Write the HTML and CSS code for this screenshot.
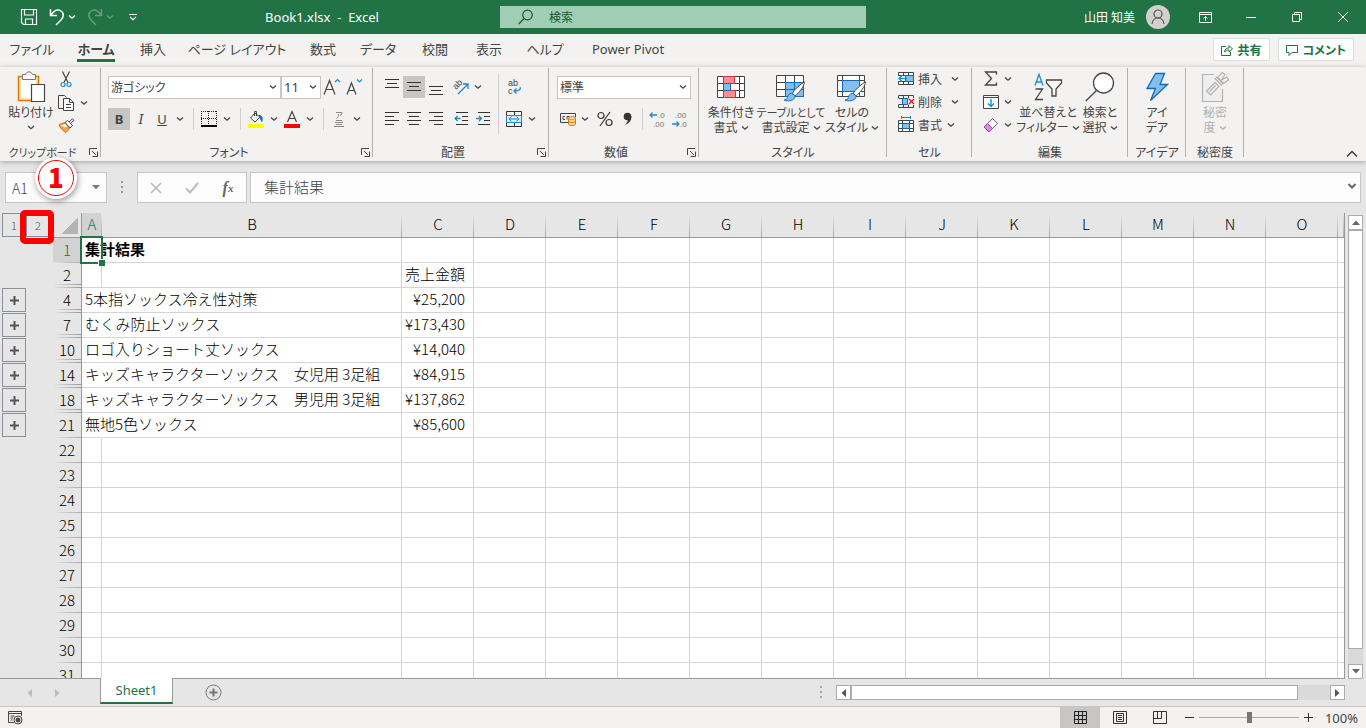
FILE: index.html
```
<!DOCTYPE html>
<html lang="ja">
<head>
  <meta charset="UTF-8" />
  <meta name="viewport" content="width=device-width, initial-scale=1.0"/>
  <title>Book1.xlsx - Excel</title>
  <link rel="stylesheet" href="styles.css">
</head>
<body>
  <svg class="defs" width="0" height="0" aria-hidden="true">
    <symbol id="chev" viewBox="0 0 8 8"><path d="M1 2.500 4 5.200 7 2.500" fill="none" stroke="currentColor" stroke-width="1.300"/></symbol>
    <symbol id="launch" viewBox="0 0 9 9"><path d="M.5 7V.5H8M3 3l4 4M8.500 3.500V8.500H3.500" fill="none" stroke="#444"/></symbol>
    <symbol id="brush" viewBox="0 0 24 22"><path d="M22.500 1C18 3 12 9 9.500 13l3 2.500C17 12 22 6 22.500 1z" fill="#fff" stroke="#444"/><path d="M9 13c-3 0-4 2-4.500 4.500C4 19 2.500 19.500 1 20c4 1.500 9 1 11-2 .8-1.200.5-2.500-.2-3.200z" fill="#83beec" stroke="#0f6cbd"/></symbol>
  </svg>

  <header class="titlebar">
    <div class="title-left">
      <div class="quick">
        <button class="q-btn" aria-label="上書き保存"><svg width="18" height="18" viewBox="0 0 18 18" fill="none" stroke="#fff" stroke-width="1.200"><path d="M1.500 1.500h15v15h-13l-2-2zM4.500 1.500v5.500h9V1.500M5.500 16.500v-5.500h7v5.500"/></svg></button>
        <button class="q-btn" aria-label="元に戻す"><svg width="16" height="18" viewBox="0 0 16 18" fill="none" stroke="#fff" stroke-width="1.500"><path d="M1.500 1v6.500H8M1.500 7.500C5 2.500 9 1 12 3s3 6 0 9l-5 5"/></svg></button>
        <button class="q-chev" aria-label="元に戻すの一覧"><svg width="8" height="8"><use href="#chev"/></svg></button>
        <button class="q-btn dim" aria-label="やり直し"><svg width="16" height="18" viewBox="0 0 16 18" fill="none" stroke="#fff" stroke-width="1.500"><path d="M14.500 1v6.500H8M14.500 7.500C11 2.500 7 1 4 3s-3 6 0 9l5 5"/></svg></button>
        <button class="q-chev dim" aria-label="やり直しの一覧"><svg width="8" height="8"><use href="#chev"/></svg></button>
        <button class="q-btn" aria-label="クイック アクセスのカスタマイズ"><svg width="8" height="8" viewBox="0 0 8 8" fill="none" stroke="#fff" stroke-width="1.200"><path d="M0 1.500h8M1 4l3 2.700L7 4"/></svg></button>
      </div>
      <h1 class="doc-title">Book1.xlsx&nbsp; -&nbsp; Excel</h1>
    </div>
    <label class="search">
      <svg width="16" height="16" viewBox="0 0 16 16" fill="none" stroke="#155c31" stroke-width="1.200"><circle cx="9.500" cy="6" r="4.800"/><path d="M6 9.500.8 15"/></svg>
      <input type="text" placeholder="検索" aria-label="検索">
    </label>
    <div class="title-right">
      <span class="user">山田 知美</span>
      <svg class="avatar" width="24" height="24" viewBox="0 0 24 24" fill="none" stroke="#555" stroke-width="1.200"><circle cx="12" cy="12" r="12" fill="#d2d0ce" stroke="none"/><circle cx="12" cy="9" r="4"/><path d="M6 19c.5-4 3-6 6-6s5.500 2 6 6"/></svg>
      <button class="win" aria-label="リボンの表示オプション"><svg width="13" height="11" viewBox="0 0 13 11" fill="none" stroke="#fff"><path d="M.5.5h12v10H.5zM.5 2.500h12M6.500 9V4.500M4.500 6.500l2-2 2 2"/></svg></button>
      <button class="win" aria-label="最小化"><svg width="10" height="10" viewBox="0 0 10 10" stroke="#fff"><path d="M0 5.500h10"/></svg></button>
      <button class="win" aria-label="元に戻す (縮小)"><svg width="10" height="10" viewBox="0 0 10 10" fill="none" stroke="#fff"><path d="M.5 2.500h7v7h-7zM2.500 2.500v-2h7v7h-2"/></svg></button>
      <button class="win" aria-label="閉じる"><svg width="10" height="10" viewBox="0 0 10 10" stroke="#fff"><path d="M0 0l10 10M10 0 0 10"/></svg></button>
    </div>
  </header>

  <div class="tabbar">
    <nav class="tabs">
      <a href="#">ファイル</a>
      <a href="#" class="active">ホーム</a>
      <a href="#">挿入</a>
      <a href="#">ページ レイアウト</a>
      <a href="#">数式</a>
      <a href="#">データ</a>
      <a href="#">校閲</a>
      <a href="#">表示</a>
      <a href="#">ヘルプ</a>
      <a href="#">Power Pivot</a>
    </nav>
    <div class="share">
      <button><svg width="12" height="12" viewBox="0 0 12 12" fill="none" stroke="#217346"><path d="M5 2.500H.5v9h9V8M3.500 8c.5-3 2-4 4.500-4V1.500l3.500 3.500L8 8V6C6 6 4.500 6.500 3.500 8z"/></svg>共有</button>
      <button><svg width="12" height="12" viewBox="0 0 12 12" fill="none" stroke="#217346"><path d="M.5 1.500h11v7H6l-3 3v-3H.5z"/></svg>コメント</button>
    </div>
  </div>

  <section class="ribbon">
    <div class="group g-clip">
      <div class="body">
        <button class="big">
          <svg width="30" height="32" viewBox="0 0 30 32" fill="none"><path d="M2.500 5.500h20v24h-20z" fill="#fce3b4" stroke="#e07b00" stroke-width="1.500"/><path d="M5 8h15v19H5z" fill="#fff"/><path d="M6.500 8.500v-5h3c1-3.500 6-3.500 7 0h3v5z" fill="#f8f8f8" stroke="#777"/><path d="M15.500 13.500h13v17h-13z" fill="#fff" stroke="#444" stroke-width="1.200"/></svg>
          <span>貼り付け</span><svg class="chev tall" width="8" height="8"><use href="#chev"/></svg>
        </button>
        <div class="stack clip-tools">
          <button aria-label="切り取り"><svg width="12" height="17" viewBox="0 0 12 17" fill="none" stroke="#444" stroke-width="1.200"><path d="M2.500.5 8 11.500M9.500.5 4 11.500"/><circle cx="3" cy="13.500" r="2" stroke="#1e8bcd"/><circle cx="9" cy="13.500" r="2" stroke="#1e8bcd"/></svg></button>
          <button aria-label="コピー"><svg width="16" height="16" viewBox="0 0 16 16" fill="none" stroke="#444"><path d="M5 13.500H.5V.5h6l2 2"/><path d="M5.500 3.500h6l4 4v8h-10zM11.500 3.500v4h4M8 9.500h5M8 12.500h5" fill="#fff"/></svg><svg class="chev" width="8" height="8"><use href="#chev"/></svg></button>
          <button aria-label="書式のコピー"><svg width="17" height="15" viewBox="0 0 17 15"><path d="M1 6.500l6-2 5 5.500-4 4.500c-3-1.500-6-4.500-7-8z" fill="#f5a24b" stroke="#d9730d"/><path d="M3 7.500l4-1.500 2 2.200-2 1.300z" fill="#fff"/><path d="M7 4.500 9.500 2.500l5 5-2.500 2.500z" fill="#fff" stroke="#444"/><path d="M11 4 14.500.8l1.500 1.500-3.500 3" fill="#fff" stroke="#444"/></svg></button>
        </div>
      </div>
      <div class="caption"><span>クリップボード</span><button aria-label="クリップボードの詳細"><svg width="9" height="9"><use href="#launch"/></svg></button></div>
    </div>

    <div class="group g-font">
      <div class="body rows">
        <div class="row">
          <div class="combo c-font"><select aria-label="フォント"><option>游ゴシック</option></select><svg width="8" height="8"><use href="#chev"/></svg></div>
          <div class="combo c-size"><select aria-label="フォント サイズ"><option>11</option></select><svg width="8" height="8"><use href="#chev"/></svg></div>
          <button class="ic" aria-label="フォント サイズの拡大"><svg width="18" height="18" viewBox="0 0 18 18" fill="none" stroke="#444" stroke-width="1.200"><path d="M1 16.500 6.500 2.500 12 16.500M3 11.500h7"/><path d="M12 4l2.500-2.500L17 4" stroke="#1e8bcd"/></svg></button>
          <button class="ic" aria-label="フォント サイズの縮小"><svg width="18" height="18" viewBox="0 0 18 18" fill="none" stroke="#444" stroke-width="1.200"><path d="M2 16.500 6.500 5 11 16.500M3.500 12.500h6"/><path d="M12 1.500 14.500 4 17 1.500" stroke="#1e8bcd"/></svg></button>
        </div>
        <div class="row">
          <button class="ic on bold">B</button>
          <button class="ic italic">I</button>
          <button class="ic s20 under">U</button>
          <button class="dd" aria-label="下線の種類"><svg width="8" height="8"><use href="#chev"/></svg></button>
          <i class="sep"></i>
          <button class="ic s20" aria-label="罫線"><svg width="16" height="16" viewBox="0 0 16 16" fill="none" stroke="#222" shape-rendering="crispEdges"><path d="M0 .5h16M.5 0v14M15.500 0v14M7.500 0v14M0 7.500h16" stroke-dasharray="1 1"/><path d="M0 15h16" stroke="#000" stroke-width="2"/></svg></button>
          <button class="dd" aria-label="罫線の種類"><svg width="8" height="8"><use href="#chev"/></svg></button>
          <i class="sep"></i>
          <button class="ic s20" aria-label="塗りつぶしの色"><svg width="16" height="18" viewBox="0 0 16 18" fill="none" stroke="#444"><path d="M7 3 2.500 8l4.500 4 5-5zM6.500 6V1.500h2V6"/><path d="M11 5.500c3 0 3.500 2 3 6-1.500-2-2-4-3-6z" fill="#1e6bb8" stroke="#1e6bb8"/><path d="M0 14h16v4H0z" fill="#ff0" stroke="none"/></svg></button>
          <button class="dd" aria-label="塗りつぶしの色の一覧"><svg width="8" height="8"><use href="#chev"/></svg></button>
          <button class="ic s20" aria-label="フォントの色"><svg width="16" height="18" viewBox="0 0 16 18" fill="none" stroke="#444" stroke-width="1.200"><path d="M3.500 12 8 1.500 12.500 12M5 8.500h6"/><path d="M0 14h16v4H0z" fill="#f00" stroke="none"/></svg></button>
          <button class="dd" aria-label="フォントの色の一覧"><svg width="8" height="8"><use href="#chev"/></svg></button>
          <i class="sep"></i>
          <button class="ic s20" aria-label="ふりがなの表示"><svg width="10" height="17" viewBox="0 0 10 17" fill="none" stroke="#888"><path d="M2 1.500h6c0 2-1 2.500-2 3M4.500 3c0 2 0 3-2 4.500M2 9.500h6M1 11.500h8M2 13.500h6M0 15.500h10"/></svg></button>
          <button class="dd" aria-label="ふりがなの一覧"><svg width="8" height="8"><use href="#chev"/></svg></button>
        </div>
      </div>
      <div class="caption"><span>フォント</span><button aria-label="フォントの詳細"><svg width="9" height="9"><use href="#launch"/></svg></button></div>
    </div>

    <div class="group g-align">
      <div class="body">
        <div class="rows">
          <div class="row">
            <button class="ic" aria-label="上揃え"><svg width="14" height="18" viewBox="0 0 14 18" stroke="#333"><path d="M0 1.500h14M2 5.500h10M0 9.500h14"/></svg></button>
            <button class="ic on" aria-label="上下中央揃え"><svg width="14" height="18" viewBox="0 0 14 18" stroke="#333"><path d="M0 4.500h14M2 8.500h10M0 12.500h14"/></svg></button>
            <button class="ic" aria-label="下揃え"><svg width="14" height="18" viewBox="0 0 14 18" stroke="#333"><path d="M0 8.500h14M2 12.500h10M0 16.500h14"/></svg></button>
            <button class="ic wide" aria-label="方向"><svg width="18" height="16" viewBox="0 0 18 16" fill="none" stroke="#444"><text transform="translate(4 11) rotate(-45)" class="g-ab">ab</text><path d="M6 15 15.500 5.500M11 5h5v5" stroke="#1e8bcd" stroke-width="1.300"/></svg><svg class="chev" width="8" height="8"><use href="#chev"/></svg></button>
          </div>
          <div class="row">
            <button class="ic" aria-label="左揃え"><svg width="14" height="14" viewBox="0 0 14 14" stroke="#333"><path d="M0 .5h14M0 4.500h9M0 8.500h14M0 12.500h9"/></svg></button>
            <button class="ic" aria-label="中央揃え"><svg width="14" height="14" viewBox="0 0 14 14" stroke="#333"><path d="M0 .5h14M2 4.500h10M0 8.500h14M2 12.500h10"/></svg></button>
            <button class="ic" aria-label="右揃え"><svg width="14" height="14" viewBox="0 0 14 14" stroke="#333"><path d="M0 .5h14M5 4.500h9M0 8.500h14M5 12.500h9"/></svg></button>
            <button class="ic after" aria-label="インデントを減らす"><svg width="14" height="14" viewBox="0 0 14 14" fill="none" stroke="#333"><path d="M2 .5h12M8 4.500h6M8 8.500h6M2 12.500h12"/><path d="M6.500 6.500H1M3.500 4 1 6.500 3.500 9" stroke="#1e8bcd" stroke-width="1.300"/></svg></button>
            <button class="ic" aria-label="インデントを増やす"><svg width="14" height="14" viewBox="0 0 14 14" fill="none" stroke="#333"><path d="M2 .5h12M8 4.500h6M8 8.500h6M2 12.500h12"/><path d="M0 6.500h5.500M3 4l2.500 2.500L3 9" stroke="#1e8bcd" stroke-width="1.300"/></svg></button>
          </div>
        </div>
        <i class="sep tall-sep"></i>
        <div class="rows">
          <div class="row">
            <button class="ic s20" aria-label="折り返して全体を表示する"><svg width="16" height="20" viewBox="0 0 16 20" fill="none"><text x="2" y="9" class="g-ab">ab</text><text x="2" y="17" class="g-ab">c</text><path d="M14 10c1 2 0 4-6 4M10.500 11.500 8 14l2.500 2.500" stroke="#1e8bcd" stroke-width="1.300"/></svg></button>
          </div>
          <div class="row">
            <button class="ic s20" aria-label="セルを結合して中央揃え"><svg width="16" height="16" viewBox="0 0 16 16" fill="none" stroke="#333"><path d="M.5.5h15v15H.5zM8.500.5v4M8.500 12v3.500"/><path d="M.5 4.500h15v7H.5z" fill="#d7ebf9" stroke="#1e8bcd"/><path d="M3 8h10M5.500 5.500 3 8l2.500 2.500M10.500 5.500 13 8l-2.500 2.500" stroke="#1e8bcd"/></svg></button>
            <button class="dd" aria-label="結合の一覧"><svg width="8" height="8"><use href="#chev"/></svg></button>
          </div>
        </div>
      </div>
      <div class="caption"><span>配置</span><button aria-label="配置の詳細"><svg width="9" height="9"><use href="#launch"/></svg></button></div>
    </div>

    <div class="group g-num">
      <div class="body rows">
        <div class="row">
          <div class="combo c-num"><select aria-label="表示形式"><option>標準</option></select><svg width="8" height="8"><use href="#chev"/></svg></div>
        </div>
        <div class="row">
          <button class="ic" aria-label="通貨表示形式"><svg width="17" height="14" viewBox="0 0 17 14" fill="none" stroke="#444"><path d="M8 10.500H.5v-9h15V5M5 4.500H3v3h2M7 7.500v-3h2.500M11.500 4.500h2"/><path d="M8.500 6v6c0 2 7 2 7 0V6" fill="#fbd6a5" stroke="#e07b00"/><ellipse cx="12" cy="6" rx="3.500" ry="1.300" fill="#fff" stroke="#e07b00"/><path d="M8.500 9c0 2 7 2 7 0" stroke="#e07b00"/></svg></button>
          <button class="dd s12" aria-label="通貨の一覧"><svg width="8" height="8"><use href="#chev"/></svg></button>
          <button class="ic after" aria-label="パーセント スタイル"><svg width="16" height="16" viewBox="0 0 16 16" fill="none" stroke="#333" stroke-width="1.200"><circle cx="4" cy="4.500" r="3"/><circle cx="12" cy="11.500" r="3"/><path d="M13 1 3 15"/></svg></button>
          <button class="ic" aria-label="桁区切りスタイル"><svg width="9" height="14" viewBox="0 0 9 14"><circle cx="4.500" cy="4.500" r="3.800" fill="#333"/><path d="M8.300 4c.5 4-2 7.500-6.300 9 2-2 3-4 2.800-6z" fill="#333"/></svg></button>
          <i class="sep"></i>
          <button class="ic" aria-label="小数点以下の表示桁数を増やす"><svg width="18" height="20" viewBox="0 0 18 20" fill="none"><path d="M1 6h7M3.500 3.500 1 6l2.500 2.500" stroke="#1e8bcd" stroke-width="1.300"/><text x="9" y="9" class="g-dec">.0</text><text x="4" y="18" class="g-dec">.00</text></svg></button>
          <button class="ic" aria-label="小数点以下の表示桁数を減らす"><svg width="18" height="20" viewBox="0 0 18 20" fill="none"><path d="M1 15h7M5.500 12.500 8 15l-2.500 2.500" stroke="#1e8bcd" stroke-width="1.300"/><text x="4" y="9" class="g-dec">.00</text><text x="9" y="18" class="g-dec">.0</text></svg></button>
        </div>
      </div>
      <div class="caption"><span>数値</span><button aria-label="数値の詳細"><svg width="9" height="9"><use href="#launch"/></svg></button></div>
    </div>

    <div class="group g-style">
      <div class="body">
        <button class="big b56">
          <svg width="30" height="28" viewBox="0 0 30 28" fill="none" stroke="#444"><path d="M1.500 3.500h27v21h-27zM1.500 10.500h27M1.500 17.500h27M7.500 3.500v21M23.500 3.500v21" fill="#fff"/><path d="M7.500 3.500h11v7h-11zM7.500 17.500h12v7h-12z" fill="#ff8c8f" stroke="#d13438"/><path d="M7.500 10.500h7v7h-7z" fill="#83beec" stroke="#0f6cbd"/></svg>
          <span>条件付き</span><span>書式 <svg class="chev" width="8" height="8"><use href="#chev"/></svg></span>
        </button>
        <button class="big b64">
          <svg width="32" height="30" viewBox="0 0 32 30" fill="none" stroke="#444"><path d="M1.500 3.500h27v21h-27zM1.500 10.500h27M1.500 17.500h27M10.500 3.500v21M19.500 3.500v21" fill="#fff"/><path d="M10.500 10.500h18v14h-18zM10.500 17.500h18M19.500 10.500v14" fill="#83beec" stroke="#0f6cbd"/><use href="#brush" x="8" y="9" width="23" height="21"/></svg>
          <span class="narrow">テーブルとして</span><span>書式設定 <svg class="chev" width="8" height="8"><use href="#chev"/></svg></span>
        </button>
        <button class="big b58">
          <svg width="32" height="30" viewBox="0 0 32 30" fill="none" stroke="#444"><path d="M1.500 3.500h27v21h-27zM1.500 8.500h27M1.500 19.500h27M6.500 3.500v21M23.500 3.500v21" fill="#fff"/><path d="M6.500 8.500h17v11h-17z" fill="#83beec" stroke="#0f6cbd"/><use href="#brush" x="8" y="9" width="23" height="21"/></svg>
          <span>セルの</span><span>スタイル <svg class="chev" width="8" height="8"><use href="#chev"/></svg></span>
        </button>
      </div>
      <div class="caption"><span>スタイル</span></div>
    </div>

    <div class="group g-cell">
      <div class="body">
        <div class="stack cell-tools">
          <button><svg width="17" height="15" viewBox="0 0 17 15" fill="none" stroke="#444"><path d="M.5 1.500h15v12H.5zM.5 4.500h15M.5 10.500h15M5.500 1.500v12M10.500 1.500v12" fill="#fff"/><path d="M7.500 4.500h8v6h-8z" fill="#83beec" stroke="#0f6cbd"/><path d="M0 5h7v5H0z" fill="#fff" stroke="none"/><path d="M9 7.500H1M4 4.500 1 7.500l3 3" stroke="#1e8bcd" stroke-width="1.300"/></svg>挿入<svg class="chev far" width="8" height="8"><use href="#chev"/></svg></button>
          <button><svg width="17" height="15" viewBox="0 0 17 15" fill="none" stroke="#444"><path d="M.5 4V1.500h15V4M.5 11v2.500h15V11M.5 4.500h5M.5 10.500h5M5.500 1.500v3M10.500 1.500v3M5.500 10.500v3M10.500 10.500v3"/><path d="M4.500 4.500h5v6h-5z" fill="#83beec" stroke="#0f6cbd"/><path d="M11 5l5 5M16 5l-5 5" stroke="#e81123" stroke-width="1.300"/></svg>削除<svg class="chev far" width="8" height="8"><use href="#chev"/></svg></button>
          <button><svg width="17" height="17" viewBox="0 0 17 17" fill="none" stroke="#444"><path d="M.5 4.500h15v11H.5zM.5 7.500h15M.5 12.500h15M4.500 4.500v11M11.500 4.500v11" fill="#fff"/><path d="M4.500 7.500h7v5h-7z" fill="#83beec" stroke="#0f6cbd"/><path d="M3.500 0v3M12.500 0v3M3.500 1.500h9" stroke="#1e8bcd"/></svg>書式<svg class="chev" width="8" height="8"><use href="#chev"/></svg></button>
        </div>
      </div>
      <div class="caption"><span>セル</span></div>
    </div>

    <div class="group g-edit">
      <div class="body">
        <div class="stack edit-tools">
          <button aria-label="オート SUM"><svg width="16" height="15" viewBox="0 0 16 15" fill="none" stroke="#444" stroke-width="1.300"><path d="M13.500 3.500V1h-11l6 6.500-6 6.500h11v-2.500"/></svg><svg class="chev" width="8" height="8"><use href="#chev"/></svg></button>
          <button aria-label="フィル"><svg width="16" height="14" viewBox="0 0 16 14" fill="none" stroke="#444"><path d="M.5.5h15v13H.5zM.5 2.500h15" fill="#fff"/><path d="M8 4v7.500M5 8.500l3 3 3-3" stroke="#1e8bcd" stroke-width="1.400"/></svg><svg class="chev" width="8" height="8"><use href="#chev"/></svg></button>
          <button aria-label="クリア"><svg width="16" height="16" viewBox="0 0 16 16" stroke="#9b3fa5"><path d="M1 10 9.500 1.500l5 5L6 15z" fill="#fff"/><path d="M1 10l3.500-3.500 5 5L6 15z" fill="#d98be0"/></svg><svg class="chev" width="8" height="8"><use href="#chev"/></svg></button>
        </div>
        <button class="big b58">
          <svg width="30" height="30" viewBox="0 0 30 30" fill="none" stroke="#444" stroke-width="1.300"><path d="M2 13.500 6 2.500l4 11M3.500 10h5" stroke="#1e8bcd"/><path d="M2.500 17h7l-7 10.500h7.500"/><path d="M13.500 8h15v3l-5.500 6v7h-4v-7l-5.500-6z" fill="#fff"/></svg>
          <span>並べ替えと</span><span>フィルター <svg class="chev" width="8" height="8"><use href="#chev"/></svg></span>
        </button>
        <button class="big b46">
          <svg width="30" height="32" viewBox="0 0 30 32" fill="none" stroke="#444" stroke-width="1.300"><circle cx="18.500" cy="12" r="10" fill="#fff"/><path d="M11.500 19.500.8 30"/></svg>
          <span>検索と</span><span>選択 <svg class="chev" width="8" height="8"><use href="#chev"/></svg></span>
        </button>
      </div>
      <div class="caption"><span>編集</span></div>
    </div>

    <div class="group g-one">
      <div class="body">
        <button class="big">
          <svg width="24" height="32" viewBox="0 0 24 32"><path d="M10.500 2.500h9L15 13.500h7.500L5.500 29.500l5-12H2z" fill="#83beec" stroke="#0f6cbd" stroke-width="1.300"/></svg>
          <span>アイ</span><span>デア</span>
        </button>
      </div>
      <div class="caption"><span>アイデア</span></div>
    </div>

    <div class="group g-one">
      <div class="body">
        <button class="big" disabled>
          <svg width="28" height="32" viewBox="0 0 28 32" fill="none" stroke="#b1b1b1" stroke-width="1.200"><path d="M13 3.500H1.500v27h20V18" fill="#eee"/><path d="M5.500 20 14 11.500l4 4-8.500 8.500zM8.500 20.500l6-6M15 5.500 22.500 13M13.500 7 21 14.500M17 6.500l4-5 3 2-3.500 5.500 5.500-3 1.500 3-5 3.500z"/></svg>
          <span>秘密</span><span>度 <svg class="chev" width="8" height="8"><use href="#chev"/></svg></span>
        </button>
      </div>
      <div class="caption"><span>秘密度</span></div>
    </div>
    <button class="collapse" aria-label="リボンを折りたたむ"><svg width="12" height="8" viewBox="0 0 12 8" fill="none" stroke="#333" stroke-width="1.300"><path d="M1 6.500l5-5 5 5"/></svg></button>
  </section>

  <main class="workbook">
    <div class="formula-bar">
      <div class="namebox"><input type="text" value="A1" aria-label="名前ボックス"><svg width="8" height="5"><path d="M0 0h8L4 4.500z" fill="#777"/></svg></div>
      <svg class="grip" width="2" height="13" fill="#999"><path d="M0 0h2v2H0zM0 5h2v2H0zM0 10h2v2H0z"/></svg>
      <div class="fx-box">
        <button aria-label="キャンセル"><svg width="12" height="12" viewBox="0 0 12 12" stroke="#bbb" stroke-width="1.600"><path d="M1 1l10 10M11 1 1 11"/></svg></button>
        <button aria-label="入力"><svg width="14" height="12" viewBox="0 0 14 12" fill="none" stroke="#bbb" stroke-width="2"><path d="M1 6.500 5 10.500 13 1"/></svg></button>
        <button class="fx" aria-label="関数の挿入"><i>f</i><small>x</small></button>
      </div>
      <div class="formula"><input type="text" value="集計結果" aria-label="数式バー"><svg width="8" height="8" viewBox="0 0 8 8" fill="none" stroke="#666" stroke-width="2"><path d="M.5 2 4 5.500 7.500 2"/></svg></div>
    </div>

    <div class="sheet-area">
      <div class="grid-wrap">
        <table class="sheet">
          <colgroup id="cols"></colgroup>
          <thead><tr id="letters"></tr></thead>
          <tbody id="cells"></tbody>
        </table>
      </div>
      <div class="vscroll">
        <button aria-label="上へ"><svg width="8" height="5"><path d="M0 5h8L4 .5z" fill="#666"/></svg></button>
        <div class="vthumb"></div>
        <div class="vtrack"></div>
        <button aria-label="下へ"><svg width="8" height="5"><path d="M0 0h8L4 4.500z" fill="#666"/></svg></button>
      </div>
      <div class="level-mark"></div>
      <div class="step-mark">1</div>
    </div>

    <div class="sheet-tabs">
      <div class="sheet-nav">
        <button aria-label="前のシート"><svg width="5" height="8"><path d="M5 0v8L.5 4z" fill="#bbb"/></svg></button>
        <button aria-label="次のシート"><svg width="5" height="8"><path d="M0 0v8l4.500-4z" fill="#bbb"/></svg></button>
      </div>
      <button class="sheet-tab">Sheet1</button>
      <button class="add" aria-label="新しいシート"><svg width="17" height="17" viewBox="0 0 17 17" fill="none" stroke="#777"><circle cx="8.500" cy="8.500" r="7.500"/><path d="M8.500 4.500v8M4.500 8.500h8" stroke-width="2"/></svg></button>
      <div class="hscroll">
        <svg class="grip" width="2" height="13" fill="#aaa"><path d="M0 0h2v2H0zM0 5h2v2H0zM0 10h2v2H0z"/></svg>
        <button aria-label="左へ"><svg width="5" height="8"><path d="M5 0v8L.5 4z" fill="#555"/></svg></button>
        <div class="hthumb"></div>
        <div class="htrack"></div>
        <button aria-label="右へ"><svg width="5" height="8"><path d="M0 0v8l4.500-4z" fill="#555"/></svg></button>
      </div>
    </div>
  </main>

  <footer class="status">
    <button class="macro" aria-label="マクロの記録"><svg width="15" height="14" viewBox="0 0 15 14" fill="none" stroke="#444"><path d="M6 11.500H.5v-11h13V5M.5 2.500h13M2.500 5h4M2.500 7h3M2.500 9h2"/><circle cx="10" cy="9" r="4"/><circle cx="10" cy="9" r="2" fill="#444"/></svg></button>
    <div class="views">
      <button class="active" aria-label="標準"><svg width="13" height="13" viewBox="0 0 13 13" fill="none" stroke="#222"><path d="M.5.5h12v12H.5zM.5 4.500h12M.5 8.500h12M4.500.5v12M8.500.5v12"/></svg></button>
      <button aria-label="ページ レイアウト"><svg width="14" height="13" viewBox="0 0 14 13" fill="none" stroke="#333"><path d="M.5.5h13v12H.5zM3.500 2.500h7v8h-7zM5 4.500h4M5 6.500h4M5 8.500h4"/></svg></button>
      <button aria-label="改ページ プレビュー"><svg width="14" height="13" viewBox="0 0 14 13" fill="none" stroke="#333"><path d="M.5.5h13v12H.5zM.5 7.500h8v-7M4.500.5v7"/></svg></button>
    </div>
    <button class="zoom-btn" aria-label="縮小"><svg width="9" height="9" stroke="#333"><path d="M0 4.500h9"/></svg></button>
    <input class="zoom" type="range" min="0" max="100" value="50" aria-label="ズーム">
    <button class="zoom-btn" aria-label="拡大"><svg width="9" height="9" stroke="#333"><path d="M0 4.500h9M4.500 0v9"/></svg></button>
    <span class="percent">100%</span>
  </footer>

  <script src="script.js"></script>
</body>
</html>
```
FILE: styles.css
```
* {
  box-sizing: border-box;
}

body {
  margin: 0;
  height: 100vh;
  display: flex;
  flex-direction: column;
  overflow: hidden;
  background-color: #e6e6e6;
  color: #444;
  font-family: "Noto Sans", "Noto Sans CJK JP", sans-serif;
  font-size: 12px;
  font-feature-settings: "palt";
}

button,
input,
select {
  font: inherit;
  font-feature-settings: inherit;
  color: inherit;
  background: none;
  border: none;
  padding: 0;
  margin: 0;
  outline: none;
}

button {
  display: flex;
  align-items: center;
  justify-content: center;
  white-space: nowrap;
}

svg {
  flex: none;
}

.defs {
  position: absolute;
}

/* title bar */
.titlebar {
  display: grid;
  grid-template-columns: 1fr 366px 1fr;
  align-items: center;
  height: 34px;
  flex: none;
  background-color: #217346;
  color: #fff;
}

.title-left,
.quick,
.title-right {
  display: flex;
  align-items: center;
}

.quick {
  padding-left: 18px;
}

.q-btn {
  width: 22px;
  height: 34px;
}

.q-btn + .q-btn {
  margin-left: 6px;
}

.q-chev {
  width: 8px;
  height: 34px;
}

.q-chev + .q-btn {
  margin-left: 8px;
}

.dim {
  opacity: 0.3;
}

.doc-title {
  flex: 1;
  margin: 0;
  font-size: 13px;
  font-weight: 400;
  line-height: 16px;
  text-align: center;
}

.search {
  display: flex;
  align-items: center;
  gap: 15px;
  height: 22px;
  padding-left: 18px;
  background-color: #a0cdb3;
}

.search input {
  flex: 1;
  min-width: 0;
}

.search input::placeholder {
  color: #155c31;
  opacity: 1;
}

.title-right {
  justify-content: flex-end;
}

.avatar {
  margin: 0 12px 0 11px;
}

.win {
  width: 46px;
  height: 34px;
}

/* ribbon tabs */
.tabbar {
  display: flex;
  justify-content: space-between;
  flex: none;
  height: 33px;
  background-color: #f3f2f1;
}

.tabs {
  display: grid;
  grid-template-columns: 64px 64px 50px 118px 54px 56px 58px 50px 62px 104px;
  font-size: 13px;
}

.tabs a {
  justify-self: center;
  height: 28px;
  line-height: 30px;
  color: #444;
  text-decoration: none;
  white-space: nowrap;
}

.tabs .active {
  font-weight: 700;
  border-bottom: 3px solid #217346;
}

.share {
  display: flex;
  gap: 8px;
  padding: 4px 12px 0 0;
}

.share button {
  gap: 5px;
  height: 23px;
  padding: 0 7px;
  background-color: #fff;
  border: 1px solid #e1dfdd;
  border-radius: 2px;
  color: #217346;
  font-weight: 700;
}

/* ribbon */
.ribbon {
  position: relative;
  z-index: 1;
  display: flex;
  flex: none;
  height: 94px;
  background-color: #f3f2f1;
  box-shadow: 0 1px 5px rgba(0, 0, 0, 0.3);
}

.group {
  display: flex;
  flex-direction: column;
  justify-content: space-between;
  flex: none;
  padding-left: 8px;
  background: linear-gradient(#b3b0ad, #b3b0ad) right 1px / 1px 89px no-repeat;
}

.g-clip { width: 101px; }
.g-font { width: 272px; padding-left: 7px; }
.g-align { width: 176px; }
.g-num { width: 150px; }
.g-style { width: 188px; padding-left: 4px; }
.g-cell { width: 85px; }
.g-edit { width: 156px; }
.g-one { width: 58px; padding: 0; }

.body {
  display: flex;
}

.body.rows,
.rows {
  display: flex;
  flex-direction: column;
  gap: 10px;
  padding-top: 9px;
}

.row {
  display: flex;
  align-items: center;
  height: 22px;
}

.caption {
  display: flex;
  height: 17px;
  margin-left: -8px;
  line-height: 17px;
  text-align: center;
}

.g-clip .caption { font-size: 11px; }
.g-font .caption { margin-left: -7px; }
.g-style .caption { margin-left: -4px; }
.g-one .caption { margin-left: 0; }

.caption span {
  flex: 1;
  white-space: nowrap;
}

.caption button {
  width: 16px;
}

.big {
  flex-direction: column;
  justify-content: flex-start;
  width: 46px;
  padding-top: 3px;
  line-height: 15px;
}

.big > svg:first-child {
  height: 34px;
  margin-bottom: 1px;
}

.big:disabled {
  color: #b1b1b1;
}

.b46 { width: 46px; }
.b56 { width: 56px; }
.b58 { width: 58px; }
.b64 { width: 64px; }
.g-one .big { width: 58px; }

.narrow {
  font-size: 11px;
}

.tall {
  height: 15px;
}

.stack {
  display: flex;
  flex-direction: column;
  padding-top: 1px;
}

.stack button {
  justify-content: flex-start;
  height: 23px;
  gap: 4px;
}

.clip-tools {
  padding: 1px 0 0 4px;
}

.clip-tools button {
  gap: 6px;
}

.clip-tools button:first-child {
  padding-left: 2px;
}

.cell-tools {
  padding: 0 0 0 3px;
}

.cell-tools button {
  gap: 3px;
}

.cell-tools .chev {
  margin-left: 2px;
}

.cell-tools .far {
  margin-left: 6px;
}

.edit-tools {
  padding: 0 2px 0 3px;
}

.edit-tools button {
  gap: 5px;
}

.edit-tools + .big {
  margin-left: 5px;
}

.ic {
  width: 22px;
  height: 22px;
}

.s20 { width: 20px; }

.after {
  margin-left: 3px;
}

.wide {
  width: 34px;
  margin-left: 3px;
  gap: 4px;
}

.on {
  background-color: #c8c6c4;
}

.bold,
.italic,
.under {
  font-size: 13px;
}

.bold { font-weight: 700; }

.italic {
  font-family: "DejaVu Serif", serif;
  font-style: italic;
}

.under { text-decoration: underline; }

.dd {
  width: 16px;
  height: 22px;
}

.s12 { width: 12px; }

.sep {
  width: 1px;
  height: 22px;
  margin: 0 5px;
  background-color: #d2d0ce;
}

.g-num .sep {
  margin: 0 4px;
}

.tall-sep {
  height: 60px;
  margin: 7px 5px 0 4px;
}

.combo {
  display: flex;
  align-items: center;
  height: 23px;
  padding-right: 3px;
  background-color: #fff;
  border: 1px solid #c8c6c4;
}

.combo select {
  flex: 1;
  min-width: 0;
  appearance: none;
  padding-left: 2px;
}

.c-font { width: 173px; }
.c-size { width: 40px; }
.c-size select { font-size: 13px; }
.c-num { width: 134px; }

.g-ab {
  fill: #444;
  stroke: none;
  font-family: "Liberation Sans", sans-serif;
  font-size: 9px;
}

.g-dec {
  fill: #777;
  stroke: none;
  font-family: "Liberation Sans", sans-serif;
  font-size: 8px;
}

.collapse {
  align-self: flex-end;
  width: 20px;
  height: 15px;
  margin-left: auto;
  margin-right: 4px;
}

/* formula bar */
.workbook {
  display: flex;
  flex: 1;
  flex-direction: column;
  min-height: 0;
}

.formula-bar {
  display: flex;
  align-items: center;
  flex: none;
  padding: 11px 5px 10px;
  font-size: 15px;
  font-weight: 300;
  font-feature-settings: normal;
  font-family: "Noto Sans CJK JP", sans-serif;
}

.namebox,
.fx-box,
.formula {
  display: flex;
  align-items: center;
  height: 31px;
  background-color: #fdfdfd;
  border: 1px solid #c6c6c6;
}

.namebox {
  width: 102px;
  padding: 0 6px;
  font-size: 14px;
}

.namebox input,
.formula input {
  flex: 1;
  min-width: 0;
}

.grip {
  margin: 0 14px;
}

.fx-box {
  width: 110px;
  margin-right: 3px;
}

.fx-box button {
  flex: 1;
}

.fx-box .fx {
  font-family: "Liberation Serif", serif;
  font-size: 16px;
  font-weight: 700;
  color: #666;
}

.fx small {
  font-size: 11px;
  font-style: italic;
}

.formula {
  flex: 1;
  padding: 0 4px 3px 13px;
}

/* sheet */
.sheet-area {
  position: relative;
  display: flex;
  flex: 1;
  min-height: 0;
}

.grid-wrap {
  flex: 1;
  overflow: hidden;
  border-right: 1px solid #999;
  border-bottom: 1px solid #999;
}

.sheet {
  width: 100%;
  table-layout: fixed;
  border-spacing: 0;
  font-family: "Noto Sans CJK JP", sans-serif;
  font-size: 15px;
  font-weight: 300;
  font-feature-settings: normal;
  color: #000;
}

.c-outline { width: 53px; }
.c-head { width: 29px; }
.c-a { width: 20px; }
.c-b { width: 300px; }
.c-std { width: 72px; }

.sheet th,
.sheet td {
  height: 25px;
  padding: 0 0 2px;
  line-height: 20px;
  white-space: nowrap;
}

.sheet th {
  font-weight: 300;
  color: #000;
  background-color: #e6e6e6;
}

.sheet thead th {
  border-bottom: 1px solid #999;
  background-image: linear-gradient(#e6e6e6, #aaa);
  background-position: right top;
  background-size: 1px 100%;
  background-repeat: no-repeat;
}

.sheet thead .corner {
  border-right: 1px solid #999;
  background-image: linear-gradient(135deg, transparent 50%, #b4b4b4 50%);
  background-position: 8px 4px;
  background-size: 17px 17px;
}

.sheet thead .levels {
  border: none;
  background-image: none;
}

.levels div {
  display: flex;
  padding-left: 2px;
}

.levels button,
.outline button {
  width: 24px;
  height: 24px;
  border: 1px solid #8a8f99;
  font-size: 11px;
  color: #555;
}

.sheet .outline {
  padding: 0 0 1px 2px;
  background-color: #e6e6e6;
  border: none;
}

.sheet .levels {
  padding-bottom: 1px;
}

.sheet tbody th {
  border-right: 1px solid #999;
  background-image: linear-gradient(to right, #e6e6e6, #aaa);
  background-position: left bottom;
  background-size: 100% 1px;
  background-repeat: no-repeat;
}

/* rows hidden below this one */
.sheet tbody .folded {
  background-image: linear-gradient(to right, #e6e6e6, #999), linear-gradient(to right, #e6e6e6, #999);
  background-position: left bottom, left 0 bottom 3px;
}

.sheet thead th.current,
.sheet tbody th.current {
  background-color: #d2d2d2;
  color: #217346;
}

.sheet thead th.current {
  border-bottom-color: #217346;
}

.sheet td {
  background-color: #fff;
  border-right: 1px solid #d4d4d4;
  border-bottom: 1px solid #d4d4d4;
}

.sheet td.spill {
  border-right-color: #fff;
}

.sheet td.spill span {
  position: relative;
  z-index: 1;
  padding-left: 3px;
}

.sheet td.num {
  text-align: right;
  padding-right: 8px;
}

.sheet td.end {
  border-right: none;
}

.sheet td.selected {
  position: relative;
  font-weight: 700;
}

.selected::before {
  content: "";
  position: absolute;
  z-index: 2;
  inset: -2px -2px -2px -2px;
  border: 2px solid #217346;
}

.selected::after {
  content: "";
  position: absolute;
  z-index: 3;
  right: -4px;
  bottom: -4px;
  width: 6px;
  height: 6px;
  background-color: #217346;
  border-left: 1px solid #fff;
  border-top: 1px solid #fff;
}

/* numbered callout over the outline level button */
.level-mark {
  position: absolute;
  left: 20px;
  top: -3px;
  width: 34px;
  height: 34px;
  border: 6px solid #f00;
  border-radius: 5px;
}

.step-mark {
  position: absolute;
  z-index: 2;
  left: 38px;
  top: -53px;
  width: 36px;
  height: 36px;
  border: 1px solid #f00;
  border-radius: 50%;
  background-color: #fff;
  box-shadow: 0 0 0 3px #fff, 1px 2px 6px 3px rgba(0, 0, 0, 0.4);
  color: #f00;
  font-family: "Noto Sans CJK JP", sans-serif;
  font-size: 26px;
  font-weight: 900;
  line-height: 32px;
  text-align: center;
}

/* scroll bars */
.vscroll {
  display: flex;
  flex-direction: column;
  width: 15px;
  margin: 2px 3px 0 3px;
  background-color: #dadada;
}

.vscroll button,
.hscroll button {
  width: 15px;
  height: 15px;
  background-color: #fff;
  border: 1px solid #ababab;
}

.vthumb {
  flex: 28;
  background-color: #fff;
  border: 1px solid #ababab;
}

.vtrack {
  flex: 1;
}

.sheet-tabs {
  display: flex;
  align-items: center;
  flex: none;
  height: 27px;
  padding-right: 21px;
}

.sheet-nav {
  display: flex;
  width: 100px;
  gap: 23px;
  padding-left: 27px;
}

.sheet-tab {
  align-self: flex-start;
  position: relative;
  width: 73px;
  height: 26px;
  margin-top: -1px;
  background-color: #fff;
  border: 1px solid #999;
  border-top: none;
  border-bottom: 2px solid #217346;
  color: #217346;
  font-size: 13px;
}

.add {
  margin-left: 32px;
}

.hscroll {
  display: flex;
  align-items: center;
  width: 39%;
  min-width: 200px;
  margin-left: auto;
}

.hscroll .grip {
  margin: 0 14px 0 0;
}

.hthumb {
  flex: 14;
  height: 15px;
  background-color: #fff;
  border: 1px solid #ababab;
}

.htrack {
  flex: 1;
  height: 15px;
  background-color: #dadada;
}

/* status bar */
.status {
  display: flex;
  align-items: center;
  flex: none;
  height: 22px;
  padding: 0 8px;
  background-color: #f3f2f1;
  border-top: 1px solid #c8c6c4;
}

.views {
  display: flex;
  margin-left: auto;
}

.views button {
  width: 40px;
  height: 21px;
}

.views .active {
  background-color: #c8c6c4;
}

.zoom-btn {
  width: 9px;
  margin: 0 5px;
}

.zoom {
  appearance: none;
  width: 100px;
  height: 20px;
}

.zoom::-webkit-slider-runnable-track {
  height: 1px;
  background-color: #aaa;
}

.zoom::-webkit-slider-thumb {
  appearance: none;
  width: 5px;
  height: 11px;
  margin-top: -5px;
  background-color: #777;
}

.percent {
  width: 40px;
  font-size: 13px;
  line-height: 20px;
  text-align: right;
}
```
FILE: script.js
```
const letters = 'ABCDEFGHIJKLMNO'.split('');

const rows = [
  { n: 1, text: '集計結果' },
  { n: 2, total: '売上金額', folded: true },
  { n: 4, text: '5本指ソックス冷え性対策', total: '¥25,200', folded: true, plus: true },
  { n: 7, text: 'むくみ防止ソックス', total: '¥173,430', folded: true, plus: true },
  { n: 10, text: 'ロゴ入りショート丈ソックス', total: '¥14,040', folded: true, plus: true },
  { n: 14, text: 'キッズキャラクターソックス　女児用 3足組', total: '¥84,915', folded: true, plus: true },
  { n: 18, text: 'キッズキャラクターソックス　男児用 3足組', total: '¥137,862', folded: true, plus: true },
  { n: 21, text: '無地5色ソックス', total: '¥85,600', plus: true }
];
for (let n = 22; n <= 31; n++) rows.push({ n });

const widths = { A: 'c-a', B: 'c-b' };
document.getElementById('cols').innerHTML =
  '<col class="c-outline"><col class="c-head">' +
  letters.map(l => `<col class="${widths[l] || 'c-std'}">`).join('') + '<col>';

document.getElementById('letters').innerHTML =
  '<th class="levels"><div><button>1</button><button>2</button></div></th><th class="corner"></th>' +
  letters.map(l => `<th class="${l === 'A' ? 'current' : ''}">${l}</th>`).join('') + '<th></th>';

const plus = '<button aria-label="詳細の表示"><svg width="9" height="9" stroke="#555" stroke-width="2"><path d="M0 4.500h9M4.500 0v9"/></svg></button>';

document.getElementById('cells').innerHTML = rows.map(row => {
  const headClass = [row.n === 1 ? 'current' : '', row.folded ? 'folded' : ''].join(' ').trim();
  const cells = letters.map(l => {
    if (l === 'A' && row.text) {
      return `<td class="spill${row.n === 1 ? ' selected' : ''}"><span>${row.text}</span></td>`;
    }
    if (l === 'C' && row.total) return `<td class="num">${row.total}</td>`;
    return '<td></td>';
  }).join('');
  return `<tr><td class="outline">${row.plus ? plus : ''}</td><th class="${headClass}">${row.n}</th>${cells}<td class="end"></td></tr>`;
}).join('');
```
